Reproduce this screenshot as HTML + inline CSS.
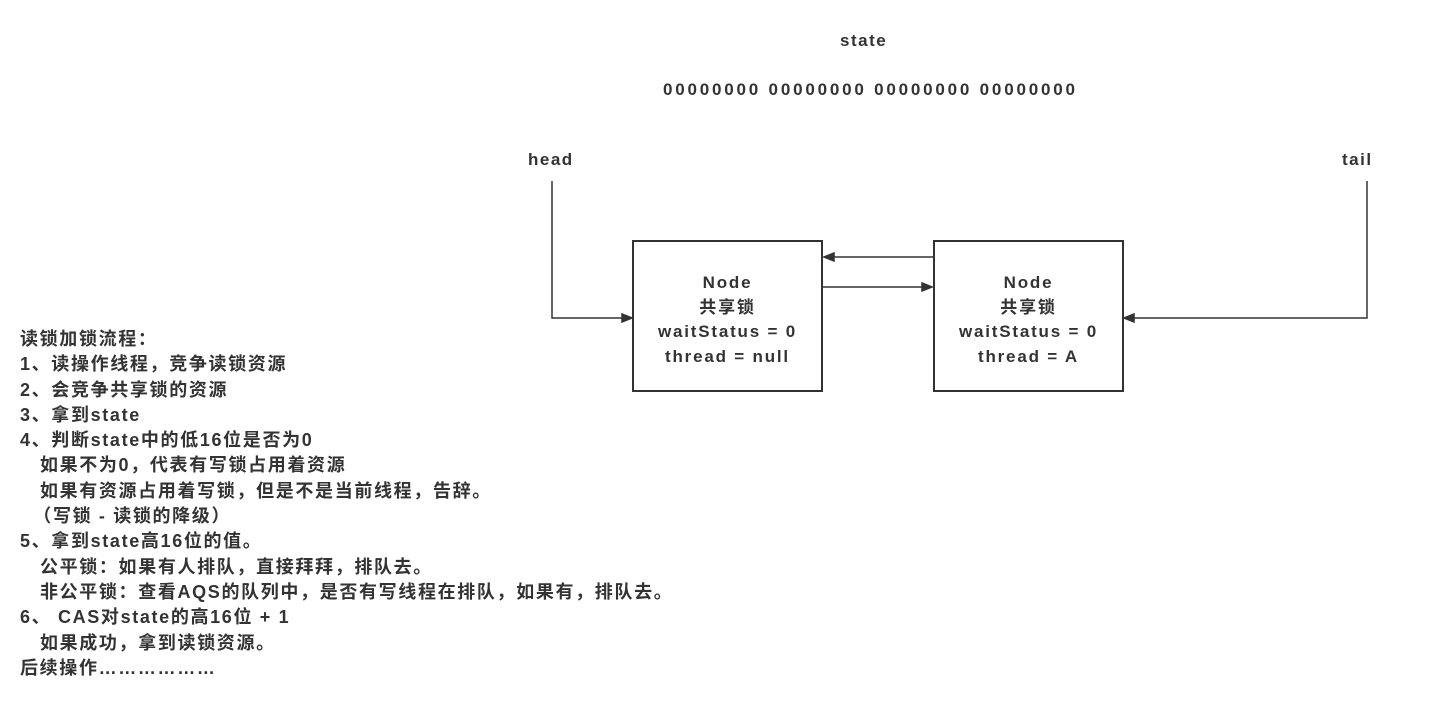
<!DOCTYPE html>
<html><head><meta charset="utf-8"><style>
body{margin:0;width:1440px;height:703px;background:#fff;position:relative;font-family:"Liberation Sans","Noto Sans CJK SC",sans-serif;font-weight:bold;color:#333;overflow:hidden}
.t{position:absolute;white-space:pre;font-size:17px;letter-spacing:1.5px}
.box{position:absolute;border:2px solid #333;box-sizing:border-box;text-align:center;font-size:17px;line-height:24.5px;padding-top:29px;letter-spacing:1.8px}
#list{position:absolute;left:20px;top:327px;font-size:18px;line-height:25.3px;white-space:pre;letter-spacing:1.65px}
</style></head><body>
<div class="t" style="left:840px;top:31px">state</div>
<div class="t" style="left:663px;top:80px;letter-spacing:2.8px">00000000 00000000 00000000 00000000</div>
<div class="t" style="left:528px;top:150px">head</div>
<div class="t" style="left:1342px;top:150px">tail</div>
<div class="box" style="left:632px;top:240px;width:191px;height:152px">Node<br>共享锁<br>waitStatus = 0<br>thread = null</div>
<div class="box" style="left:933px;top:240px;width:191px;height:152px">Node<br>共享锁<br>waitStatus = 0<br>thread = A</div>
<svg width="1440" height="703" style="position:absolute;left:0;top:0" fill="none" stroke="#333" stroke-width="1.5">
<path d="M552 181V318H622"/><path d="M632 318l-10-4v8z" fill="#333"/>
<path d="M933 257H834"/><path d="M824 257l10-4v8z" fill="#333"/>
<path d="M823 287H922"/><path d="M932 287l-10-4v8z" fill="#333"/>
<path d="M1367 181V318H1134"/><path d="M1124 318l10-4v8z" fill="#333"/>
</svg>
<div id="list">读锁加锁流程：
1、读操作线程，竞争读锁资源
2、会竞争共享锁的资源
3、拿到state
4、判断state中的低16位是否为0
   如果不为0，代表有写锁占用着资源
   如果有资源占用着写锁，但是不是当前线程，告辞。
  （写锁 - 读锁的降级）
5、拿到state高16位的值。
   公平锁：如果有人排队，直接拜拜，排队去。
   非公平锁：查看AQS的队列中，是否有写线程在排队，如果有，排队去。
6、 CAS对state的高16位 + 1
   如果成功，拿到读锁资源。
后续操作………………</div>
</body></html>
